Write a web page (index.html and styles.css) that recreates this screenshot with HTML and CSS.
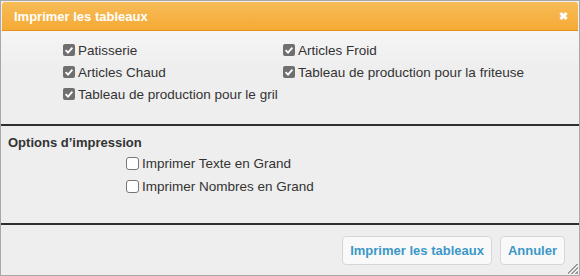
FILE: index.html
```html
<!DOCTYPE html>
<html lang="fr">
<head>
    <meta charset="UTF-8">
    <title>Imprimer les tableaux</title>
    <link rel="stylesheet" href="styles.css">
</head>
<body>
    <div class="dialog">
        <div class="titlebar">
            <span class="title">Imprimer les tableaux</span>
            <span class="close">&#10006;</span>
        </div>

        <div class="charts">
            <label class="check"><span class="box on"><svg viewBox="0 0 12 12"><path d="M2.6 6.2 L5 8.6 L9.4 3.6" /></svg></span>Patisserie</label>
            <label class="check"><span class="box on"><svg viewBox="0 0 12 12"><path d="M2.6 6.2 L5 8.6 L9.4 3.6" /></svg></span>Articles Froid</label>
            <label class="check"><span class="box on"><svg viewBox="0 0 12 12"><path d="M2.6 6.2 L5 8.6 L9.4 3.6" /></svg></span>Articles Chaud</label>
            <label class="check"><span class="box on"><svg viewBox="0 0 12 12"><path d="M2.6 6.2 L5 8.6 L9.4 3.6" /></svg></span>Tableau de production pour la friteuse</label>
            <label class="check"><span class="box on"><svg viewBox="0 0 12 12"><path d="M2.6 6.2 L5 8.6 L9.4 3.6" /></svg></span>Tableau de production pour le gril</label>
        </div>

        <div class="options">
            <h4>Options d’impression</h4>
            <div class="option-list">
                <label class="check"><span class="box"></span>Imprimer Texte en Grand</label>
                <label class="check"><span class="box"></span>Imprimer Nombres en Grand</label>
            </div>
        </div>

        <div class="buttons">
            <button class="btn">Imprimer les tableaux</button>
            <button class="btn">Annuler</button>
            <span class="grip"></span>
        </div>
    </div>
</body>
</html>
```

FILE: styles.css
```css
body {
    margin: 0;
    padding: 0;
    font-family: "Liberation Sans", Arial, sans-serif;
    font-size: 13.5px;
    color: #333;
    background: #fff;
}
.dialog {
    width: 580px;
    height: 276px;
    box-sizing: border-box;
    border: 1px solid #a8a8a8;
    background: #eeeeee;
    display: flex;
    flex-direction: column;
    position: relative;
}
.titlebar {
    margin: 1px 1px 0 1px;
    height: 29px;
    box-sizing: border-box;
    padding: 0 10px 0 12px;
    background: linear-gradient(#f7bc57, #f5aa36);
    border-bottom: 1px solid #e8921a;
    border-radius: 3px 3px 0 0;
    display: flex;
    align-items: center;
    justify-content: space-between;
    color: #fff;
}
.title {
    font-weight: bold;
    font-size: 13px;
}
.close {
    font-size: 11px;
    font-weight: bold;
}
.charts {
    height: 95px;
    box-sizing: border-box;
    padding: 8px 0 0 62px;
    display: grid;
    grid-template-columns: 220px auto;
    grid-auto-rows: 22px;
    background: linear-gradient(#f5f5f5, #eeeeee 40%);
    border-bottom: 2px solid #2f2f2f;
}
.check {
    display: flex;
    align-items: center;
    white-space: nowrap;
}
.box {
    width: 12px;
    height: 12px;
    box-sizing: border-box;
    border-radius: 2px;
    margin-right: 3px;
    flex: none;
}
.box.on {
    background: #6f6f6f;
}
.box svg {
    display: block;
    width: 12px;
    height: 12px;
    fill: none;
    stroke: #fff;
    stroke-width: 1.8;
}
.options {
    height: 99px;
    box-sizing: border-box;
    padding: 7px 0 0 7px;
    border-bottom: 2px solid #2f2f2f;
}
.options h4 {
    margin: 0;
    font-size: 13px;
    font-weight: bold;
    height: 19px;
    line-height: 19px;
}
.option-list {
    padding-left: 118px;
    display: grid;
    grid-auto-rows: 23px;
}
.option-list .box {
    border: 1px solid #777;
    background: #fff;
    border-radius: 3px;
    width: 13px;
    height: 13px;
}
.buttons {
    flex: 1;
    display: flex;
    justify-content: flex-end;
    align-items: flex-start;
    gap: 8px;
    padding: 11px 14px 0 0;
}
.btn {
    font-family: "Liberation Sans", Arial, sans-serif;
    font-size: 13px;
    font-weight: bold;
    color: #3b97c8;
    background: #f9f9f9;
    border: 1px solid #d6d6d6;
    border-radius: 4px;
    height: 29px;
    padding: 0 7px;
}
.grip {
    position: absolute;
    right: 1px;
    bottom: 1px;
    width: 10px;
    height: 10px;
    background: linear-gradient(135deg, transparent 45%, #999 45%, #999 52%, transparent 52%, transparent 65%, #999 65%, #999 72%, transparent 72%, transparent 85%, #999 85%);
}
```
